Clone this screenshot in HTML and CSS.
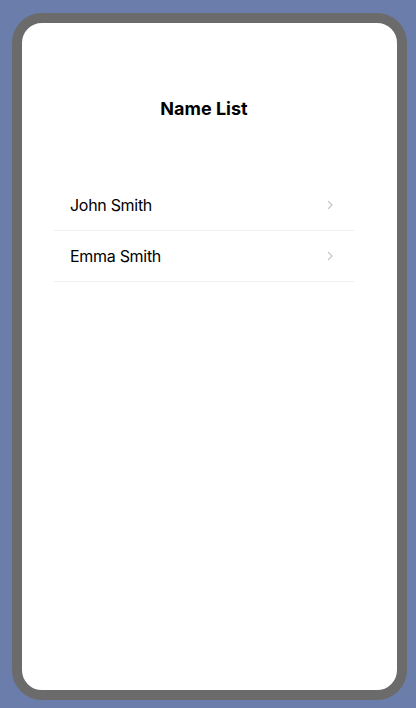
FILE: index.html
```html
<!DOCTYPE html>
<html lang="en">
  <head>
    <meta charset="UTF-8">
    <meta name="viewport" content="width=device-width, initial-scale=1">
    <title>Name List</title>
    <link rel="stylesheet" href="styles.css">
  </head>
  <body>
    <div class="phone">
      <main class="screen">
        <h1 class="title">Name List</h1>
        <ul class="list">
          <li class="row">
            <span class="name">John Smith</span>
            <svg class="chevron" width="7" height="10" viewBox="0 0 7 10">
              <path d="M1.5 1.5 L5 5 L1.5 8.5" fill="none" stroke="#c7c7cc" stroke-width="1.3" stroke-linecap="round" stroke-linejoin="round"/>
            </svg>
          </li>
          <li class="row">
            <span class="name">Emma Smith</span>
            <svg class="chevron" width="7" height="10" viewBox="0 0 7 10">
              <path d="M1.5 1.5 L5 5 L1.5 8.5" fill="none" stroke="#c7c7cc" stroke-width="1.3" stroke-linecap="round" stroke-linejoin="round"/>
            </svg>
          </li>
        </ul>
      </main>
    </div>
  </body>
</html>
```

FILE: styles.css
```css
* {
  margin: 0;
  padding: 0;
  box-sizing: border-box;
}

body {
  background-color: #6b7eab;
  font-family: Inter, "Liberation Sans", sans-serif;
  color: #000;
}

.phone {
  margin: 13px 0 0 12px;
  width: 395px;
  height: 687px;
  border: 10px solid #6b6b6b;
  border-radius: 30px;
  background-color: #fff;
  overflow: hidden;
}

.screen {
  padding: 75px 0 0 32px;
  width: 332px;
}

.title {
  font-size: 18px;
  line-height: 22px;
  font-weight: 700;
  text-align: center;
  margin-bottom: 60px;
}

.list {
  list-style: none;
}

.row {
  display: flex;
  align-items: center;
  justify-content: space-between;
  height: 51px;
  padding: 0 20px 0 16px;
  border-bottom: 1px solid #efeff2;
}

.name {
  font-size: 16px;
  line-height: 20px;
  letter-spacing: -0.3px;
}

.chevron {
  display: block;
}
```
